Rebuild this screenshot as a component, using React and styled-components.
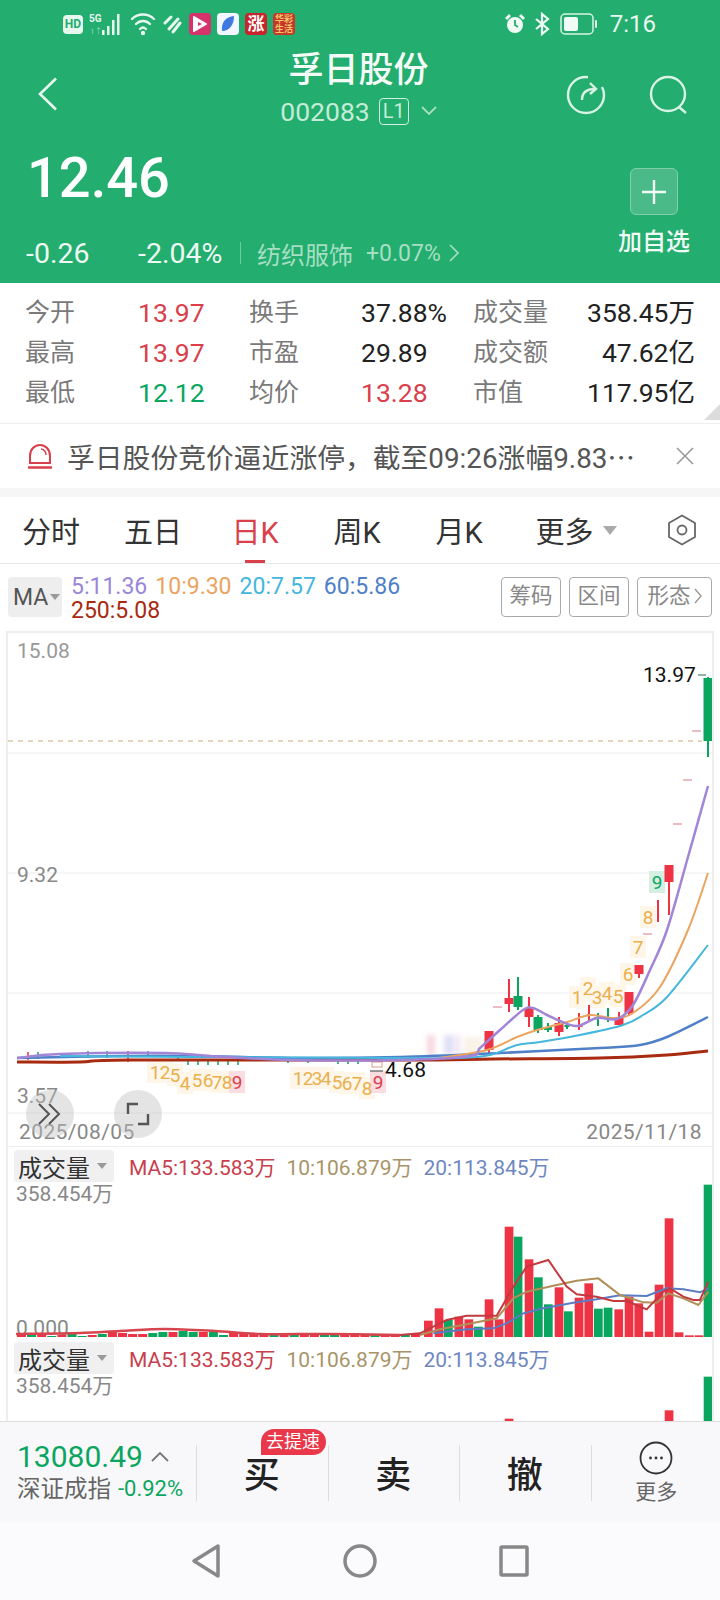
import React from "react";
import styled, { createGlobalStyle } from "styled-components";

const RED = "#ee3344";
const GREEN = "#0aa65f";
const FONT = `Roboto, "Noto Sans CJK SC", sans-serif`;

const GlobalStyle = createGlobalStyle`
    * { box-sizing: border-box; }
    html, body { margin: 0; padding: 0; background: #fff; }
    body { font-family: ${FONT}; }
`;

const Page = styled.div`
    width: 720px;
    height: 1600px;
    overflow: hidden;
    display: flex;
    flex-direction: column;
    background: #fff;
`;

/* header */
const Header = styled.div`
    height: 283px;
    flex: none;
    background: #23ad6e;
    color: #fff;
    display: flex;
    flex-direction: column;
`;

const StatusBar = styled.div`
    height: 48px;
    flex: none;
    display: flex;
    align-items: center;
    padding: 0 64px 0 63px;
`;

const StatusGroup = styled.div`
    display: flex;
    align-items: center;
    gap: ${p => p.$gap || 6}px;
`;

const HdBadge = styled.div`
    width: 20px;
    height: 19px;
    border-radius: 4px;
    background: #e6f7ee;
    color: #23ad6e;
    font-size: 12px;
    font-weight: 700;
    line-height: 19px;
    text-align: center;
`;

const AppIcon = styled.div`
    width: 22px;
    height: 22px;
    border-radius: 4px;
    background: ${p => p.$bg};
    color: ${p => p.$fg || "#fff"};
    font-size: ${p => p.$size || 10}px;
    font-weight: 700;
    line-height: ${p => p.$lh || 22}px;
    text-align: center;
    display: flex;
    align-items: center;
    justify-content: center;
    overflow: hidden;
`;

const Clock = styled.div`
    font-size: 24px;
    margin-left: 12px;
    color: #e9f8f0;
`;

const TitleBar = styled.div`
    height: 82px;
    flex: none;
    display: grid;
    grid-template-columns: 1fr auto 1fr;
    padding-top: 3px;
`;

const BackCell = styled.div`
    padding: 26px 0 0 37px;
`;

const TitleCell = styled.div`
    display: flex;
    flex-direction: column;
    align-items: center;
`;

const Title = styled.div`
    font-size: 35px;
    font-weight: 500;
    line-height: 40px;
    margin-right: 3px;
    color: #f4fbf7;
`;

const CodeRow = styled.div`
    display: flex;
    align-items: center;
    height: 30px;
    margin-top: 5px;
    font-size: 26.5px;
    margin-right: 3px;
    color: #c5ecd9;
`;

const Level = styled.div`
    width: 30px;
    height: 27px;
    margin-left: 9px;
    border: 1px solid #d3f0e2;
    border-radius: 4px;
    font-size: 20px;
    line-height: 25px;
    text-align: center;
`;

const ActionsCell = styled.div`
    display: flex;
    justify-content: flex-end;
    gap: 43px;
    padding: 24px 31px 0 0;
`;

const Quote = styled.div`
    flex: 1;
    display: flex;
    justify-content: space-between;
    padding: 18px 30px 0 26px;
`;

const QuoteLeft = styled.div`
    display: flex;
    flex-direction: column;
`;

const Price = styled.div`
    font-size: 56px;
    font-weight: 500;
    line-height: 60px;
    padding-left: 1px;
`;

const ChangeRow = styled.div`
    margin-top: 30px;
    height: 30px;
    display: flex;
    align-items: center;
`;

const Change = styled.span`
    font-size: 28.5px;
    width: ${p => p.$w}px;
    color: #eefaf4;
`;

const Sector = styled.span`
    display: flex;
    align-items: center;
    gap: 13px;
    height: 22px;
    border-left: 1px solid #6fcaa0;
    padding-left: 16px;
    margin-left: 4px;
    color: #a6dfc4;
    font-size: 24px;
    white-space: nowrap;
`;

const SectorRate = styled.span`
    font-size: 23px;
`;

const AddCol = styled.div`
    display: flex;
    flex-direction: column;
    align-items: center;
    padding-top: 20px;
`;

const AddBox = styled.div`
    width: 48px;
    height: 47px;
    border: 1px solid #7fd0aa;
    border-radius: 6px;
    background: rgba(255, 255, 255, 0.18);
    display: flex;
    align-items: center;
    justify-content: center;
`;

const AddLabel = styled.div`
    margin-top: 13px;
    font-size: 24px;
    line-height: 28px;
    font-weight: 500;
    color: #f0fbf6;
`;

/* stats */
const Stats = styled.div`
    position: relative;
    height: 140px;
    flex: none;
    padding: 10px 25px 0;
    display: grid;
    grid-template-columns: 113px 111px 112px 112px 1fr auto;
    grid-auto-rows: 40px;
    align-items: center;
    font-size: 26.5px;
    line-height: 40px;
`;

const StatLabel = styled.div`
    color: #7a7a7a;
    font-size: 25px;
`;

const StatValue = styled.div`
    color: ${p => p.$color || "#222"};
    text-align: ${p => (p.$right ? "right" : "left")};
    white-space: nowrap;
`;

const CornerMark = styled.div`
    position: absolute;
    right: 0;
    bottom: 3px;
    width: 0;
    height: 0;
    border-left: 16px solid transparent;
    border-bottom: 16px solid #dcdcdc;
`;

/* news alert */
const Alert = styled.div`
    height: 65px;
    flex: none;
    border-top: 1px solid #eee;
    display: flex;
    align-items: center;
    padding: 0 26px 0 27px;
    color: #555;
    font-size: 27.8px;
`;

const AlertText = styled.div`
    flex: 1;
    margin-left: 14px;
    white-space: nowrap;
    overflow: hidden;
`;

const Band = styled.div`
    height: 9px;
    flex: none;
    background: #f6f6f6;
`;

/* period tabs */
const Tabs = styled.div`
    height: 67px;
    flex: none;
    display: flex;
    align-items: center;
    border-bottom: 1px solid #e8e8e8;
    padding-right: 23px;
`;

const Tab = styled.div`
    position: relative;
    width: 102px;
    height: 100%;
    display: flex;
    align-items: center;
    justify-content: center;
    gap: 9px;
    font-size: 29px;
    margin-left: ${p => p.$shift || 0}px;
    color: ${p => (p.$active ? "#d9404c" : "#333")};

    ${p => p.$active && `
        &::after {
            content: "";
            position: absolute;
            left: 41px;
            bottom: 0;
            width: 20px;
            height: 3px;
            background: #d9404c;
        }
    `}
`;

const TabCaret = styled.span`
    width: 0;
    height: 0;
    border-left: 7px solid transparent;
    border-right: 7px solid transparent;
    border-top: 9px solid #aaa;
`;

const TabIcon = styled.div`
    margin-left: auto;
    display: flex;
`;

/* MA legend */
const MaRow = styled.div`
    height: 67px;
    flex: none;
    display: flex;
    align-items: flex-start;
    padding: 13px 8px 0;
`;

const MaSelect = styled.div`
    width: 54px;
    height: 40px;
    flex: none;
    border-radius: 4px;
    background: #eee;
    color: #555;
    font-size: 23px;
    display: flex;
    align-items: center;
    gap: 2px;
    padding-left: 5px;
`;

const SmallCaret = styled.span`
    width: 0;
    height: 0;
    border-left: 5px solid transparent;
    border-right: 5px solid transparent;
    border-top: 6px solid #999;
`;

const MaLegend = styled.div`
    flex: 1;
    margin: -2px 0 0 9px;
    font-size: 23px;
    line-height: 24px;
`;

const MaItem = styled.span`
    color: ${p => p.$color};
    margin-right: 8px;
`;

const ToolButtons = styled.div`
    display: flex;
    gap: 8px;
`;

const ToolButton = styled.div`
    width: ${p => p.$w || 60}px;
    height: 40px;
    border: 1px solid #aaa;
    border-radius: 4px;
    color: #888;
    font-size: 21.5px;
    line-height: 32px;
    padding-bottom: 3px;
    display: flex;
    align-items: center;
    justify-content: center;
    gap: 3px;
`;

/* chart frame */
const ChartFrame = styled.div`
    flex: 1;
    min-height: 0;
    margin: 0 6px;
    border: 2px solid #eee;
    border-bottom: 0;
    overflow: hidden;
`;

const PricePanel = styled.div`
    position: relative;
    height: 482px;
`;

const ChartSvg = styled.svg`
    display: block;
    text {
        font-family: ${FONT};
    }
`;

const RoundButton = styled.div`
    position: absolute;
    top: ${1090 - 633}px;
    left: ${p => p.$left}px;
    width: 48px;
    height: 48px;
    border-radius: 50%;
    background: rgba(190, 190, 190, 0.42);
    display: flex;
    align-items: center;
    justify-content: center;
`;

const DateRow = styled.div`
    height: 32px;
    display: flex;
    align-items: center;
    justify-content: space-between;
    padding: 3px 10px 0 11px;
    border-bottom: 1px solid #eee;
    color: #888;
    font-size: 21px;
    letter-spacing: 0.4px;
`;

const VolumePanel = styled.div`
    position: relative;
    height: 192px;
`;

const VolumeChart = styled.div`
    position: absolute;
    inset: 0;
`;

const VolumeHead = styled.div`
    position: relative;
    display: flex;
    align-items: center;
    padding: 3px 0 0 6px;
    font-size: 21px;
`;

const VolumeSelect = styled.div`
    width: 100px;
    height: 32px;
    border-radius: 4px;
    background: #f0f0f0;
    color: #333;
    font-size: 24px;
    display: flex;
    align-items: center;
    gap: 7px;
    padding-left: 4px;
    margin-right: 15px;
`;

const VolumeItem = styled.span`
    color: ${p => p.$color};
    margin-right: 11px;
`;

const VolumeMax = styled.div`
    position: relative;
    padding-left: 8px;
    color: #888;
    font-size: 21px;
    line-height: 24px;
`;

/* trade bar */
const TradeBar = styled.div`
    height: 101px;
    flex: none;
    border-top: 1px solid #ddd;
    background: #f8f8fa;
    display: flex;
`;

const IndexCell = styled.div`
    width: 196px;
    flex: none;
    padding: 16px 0 0 17px;
`;

const IndexValue = styled.div`
    display: flex;
    align-items: center;
    gap: 8px;
    height: 36px;
    font-size: 30px;
    color: ${GREEN};
`;

const IndexInfo = styled.div`
    display: flex;
    align-items: center;
    gap: 7px;
    height: 30px;
    line-height: 30px;
    color: #666;
    font-size: 23.5px;
    white-space: nowrap;
`;

const IndexRate = styled.span`
    color: ${GREEN};
    font-size: 22px;
`;

const TradeCell = styled.div`
    position: relative;
    width: 131.5px;
    flex: none;
    display: flex;
    flex-direction: column;
    align-items: center;
    justify-content: center;
    color: #222;
    font-size: 36px;
    font-weight: 500;

    &::before {
        content: "";
        position: absolute;
        left: 0;
        top: 23px;
        height: 56px;
        width: 1px;
        background: #ddd;
    }
`;

const Badge = styled.div`
    position: absolute;
    top: 7px;
    right: 2px;
    width: 65px;
    height: 26px;
    border-radius: 14px 14px 14px 0;
    background: #e8384a;
    color: #fff;
    font-size: 18px;
    font-weight: 400;
    line-height: 26px;
    text-align: center;
`;

const MoreLabel = styled.div`
    margin-top: 4px;
    color: #666;
    font-size: 21px;
    line-height: 26px;
    font-weight: 400;
`;

const SystemNav = styled.div`
    height: 78px;
    flex: none;
    background: #fbfbfd;
    display: flex;
    align-items: center;
    justify-content: center;
    gap: 121px;
`;

/* chart data, in page coordinates so the viewBoxes below line up with the picture */
const linePath = pts => "M" + pts.map(p => p.join(" ")).join("L");

// catmull-rom through the points, keeps the MA lines from stepping
const smooth = pts => {
    let d = `M${pts[0][0]} ${pts[0][1]}`;
    for (let i = 0; i < pts.length - 1; i++) {
        const p0 = pts[i - 1] || pts[i];
        const p1 = pts[i];
        const p2 = pts[i + 1];
        const p3 = pts[i + 2] || p2;
        const c1x = p1[0] + (p2[0] - p0[0]) / 6;
        const c1y = p1[1] + (p2[1] - p0[1]) / 6;
        const c2x = p2[0] - (p3[0] - p1[0]) / 6;
        const c2y = p2[1] - (p3[1] - p1[1]) / 6;
        d += `C${c1x} ${c1y} ${c2x} ${c2y} ${p2[0]} ${p2[1]}`;
    }
    return d;
};

const maLines = [
    { color: "#a82a10", w: 3, pts: [[17, 1062], [80, 1062], [130, 1060], [400, 1060], [493, 1059], [600, 1058], [667, 1055], [708, 1051]] },
    { color: "#4f80c8", w: 2.5, pts: [[17, 1058], [120, 1056], [200, 1056], [300, 1058], [400, 1057], [500, 1053], [600, 1048], [640, 1045], [667, 1037], [708, 1017]] },
    { color: "#45b7dc", w: 2, pts: [[60, 1056], [200, 1057], [400, 1058], [460, 1058], [490, 1055], [517, 1045], [540, 1042], [580, 1035], [623, 1025], [643, 1015], [667, 997], [708, 945]] },
    { color: "#eba45f", w: 2, pts: [[440, 1058], [487, 1050], [517, 1037], [537, 1030], [567, 1022], [590, 1015], [613, 1018], [633, 1013], [660, 987], [688, 930], [708, 873]] },
    { color: "#a186d8", w: 2.5, pts: [[17, 1058], [60, 1054], [165, 1053], [210, 1056], [290, 1060], [400, 1060], [470, 1056], [480, 1048], [500, 1030], [523, 1010], [533, 1008], [547, 1015], [560, 1021], [577, 1026], [597, 1018], [617, 1019], [633, 1005], [650, 970], [667, 930], [688, 857], [708, 786]] },
];

// x, body top, body bottom, wick top, wick bottom, width
const candles = [
    [489, 1031, 1050, 1031, 1053, 9, RED], [509, 998, 1004, 979, 1012, 9, RED], [518, 996, 1007, 977, 1010, 9, GREEN],
    [529, 1008, 1017, 997, 1027, 9, RED], [538, 1017, 1030, 1015, 1033, 9, GREEN], [548, 1027, 1030, 1023, 1032, 8, GREEN],
    [559, 1023, 1032, 1017, 1036, 9, RED], [567, 1025, 1027, 1022, 1029, 5, GREEN], [579, 1025, 1027, 1013, 1030, 7, RED],
    [589, 1014, 1016, 1005, 1020, 4, RED], [598, 1017, 1019, 1013, 1026, 7, GREEN], [608, 1014, 1015, 1008, 1022, 2, GREEN],
    [619, 1017, 1025, 1012, 1025, 9, RED], [629, 992, 1013, 992, 1016, 9, RED], [639, 965, 974, 965, 978, 9, RED],
    [658, 901, 902, 900, 922, 2, RED], [669, 865, 882, 865, 915, 9, RED],
    [708, 678, 741, 677, 757, 9, GREEN],
];

const priceTicks = [[697, 731], [688, 780], [678, 824], [648, 934], [498, 1007]];

const tdOrange = [
    [155, 1072, "1"], [165, 1072, "2"], [175, 1075, "5"], [185, 1083, "4"], [197, 1080, "5"], [208, 1080, "6"], [217, 1082, "7"], [227, 1082, "8"],
    [298, 1078, "1"], [308, 1078, "2"], [317, 1078, "3"], [326, 1078, "4"], [337, 1082, "5"], [347, 1083, "6"], [357, 1083, "7"], [367, 1088, "8"],
    [577, 997, "1"], [588, 988, "2"], [597, 997, "3"], [607, 993, "4"], [618, 996, "5"],
    [628, 974, "6"], [638, 947, "7"], [648, 917, "8"],
];

const tdRest = [
    [237, 1082, "9", "#d9404c", "#f9dde0"],
    [378, 1082, "9", "#d9404c", "#f9dde0"],
    [657, 882, "9", GREEN, "#d5efe3"],
];

const smallWicks = [
    [28, 1052, 1060, RED], [38, 1052, 1059, GREEN], [88, 1051, 1058, GREEN], [107, 1051, 1058, GREEN],
    [128, 1051, 1062, RED], [148, 1051, 1057, GREEN], [178, 1056, 1061, GREEN], [188, 1060, 1065, GREEN],
    [198, 1060, 1065, GREEN], [208, 1060, 1065, GREEN], [218, 1060, 1065, GREEN], [228, 1060, 1065, GREEN],
    [238, 1060, 1065, GREEN], [288, 1060, 1063, GREEN], [308, 1060, 1063, GREEN], [338, 1059, 1064, GREEN],
    [348, 1059, 1064, GREEN], [358, 1059, 1064, GREEN],
];

const volBars = [
    [424, 452, RED], [434.7, 415, RED], [444, 450, GREEN], [454.5, 440, RED], [464.5, 448, RED], [474, 470, GREEN],
    [484.7, 388, RED], [494.7, 448, RED], [504.7, 170, RED], [513.7, 200, GREEN], [524.7, 268, RED], [534, 322, GREEN],
    [544, 403, GREEN], [554.7, 352, RED], [564, 424, GREEN], [574.7, 383, RED], [584.4, 340, RED], [594, 416, GREEN],
    [603.7, 413, GREEN], [614.4, 418, RED], [624.7, 380, RED], [634.4, 400, RED], [644.7, 485, RED], [654.7, 344, RED],
    [664.7, 145, RED], [674.7, 487, RED], [685, 496, RED], [694.7, 496, RED], [703.7, 44, GREEN],
];

const lowBarHeights = [3, 2, 3, 1, 2, 3, 1, 2, 3, 6, 4, 3, 3, 4, 5, 5, 6, 5, 5, 5, 2, 4, 4, 3, 4, 4, 2, 2, 2, 3, 2, 2, 3, 2, 2, 3, 2, 2, 2, 3];
const lowBarColors = [RED, GREEN, RED, GREEN, RED, GREEN, GREEN, RED, GREEN, RED, RED, RED, RED, GREEN, GREEN, RED, GREEN, GREEN, RED, GREEN, GREEN, RED, RED, RED, RED, GREEN, RED, GREEN, RED, RED, GREEN, GREEN, RED, RED, RED, GREEN, RED, RED, GREEN, RED];

const volY = v => 1170 + v / 3;
const zoomPts = list => list.map(([x, y]) => [400 + x / 3, volY(y)]);

const volRed = zoomPts([[0, 495], [60, 490], [100, 470], [140, 450], [200, 437], [290, 437], [340, 350], [380, 290], [445, 270], [500, 350], [530, 373], [590, 380], [640, 393], [680, 393], [740, 418], [790, 365], [810, 355], [850, 380], [880, 390], [900, 390], [925, 335]]);
const volTan = zoomPts([[60, 495], [120, 478], [200, 463], [290, 445], [340, 385], [380, 365], [470, 345], [530, 332], [595, 325], [660, 375], [730, 397], [770, 398], [805, 370], [850, 385], [895, 405], [925, 365]]);
const volBlue = zoomPts([[100, 490], [200, 478], [280, 475], [320, 460], [370, 430], [430, 415], [520, 398], [590, 388], [660, 376], [740, 378], [800, 355], [850, 358], [900, 367], [925, 355]]);
const volLeft = [[16, 1334], [80, 1333], [120, 1331], [165, 1329], [215, 1331], [260, 1334], [330, 1334], [400, 1335]];

const TD_SIZE = 19;

const PriceChart = () => (
    <ChartSvg width="704" height="482" viewBox="8 633 704 482">
        {[753, 873, 993, 1113].map(y => (
            <line key={y} x1="8" x2="712" y1={y} y2={y} stroke="#f3f3f3" strokeWidth="1.5" />
        ))}
        <line x1="8" x2="702" y1="741" y2="741" stroke="#c9ad7c" strokeWidth="1" strokeDasharray="5 5" />
        <text x="17" y="658" fontSize="21" fill="#999">15.08</text>
        <text x="17" y="882" fontSize="21" fill="#888">9.32</text>
        <text x="17" y="1103" fontSize="21" fill="#888">3.57</text>

        <g opacity="0.55" style={{ filter: "blur(2.5px)" }}>
            <rect x="427" y="1035" width="8" height="20" fill="#f2b8c6" />
            <rect x="444" y="1035" width="10" height="20" fill="#c8c8ee" />
            <rect x="456" y="1035" width="4" height="20" fill="#e2c8e8" />
            <rect x="464" y="1037" width="18" height="18" fill="#f3e8d4" />
        </g>

        {smallWicks.map(([x, a, b, c], i) => (
            <line key={i} x1={x} x2={x} y1={a} y2={b} stroke={c} strokeWidth="1.5" />
        ))}

        {/* backgrounds first, the marks sit tight enough to touch each other */}
        {tdOrange.map(([x, y], i) => (
            <rect key={i} x={x - 8} y={y - 11} width="16" height="22" fill="#fef6e9" />
        ))}
        {tdRest.map(([x, y, , , bg]) => (
            <rect key={x} x={x - 8} y={y - 11} width="16" height="22" fill={bg} />
        ))}
        {tdOrange.map(([x, y, d], i) => (
            <text key={i} x={x} y={y + TD_SIZE * 0.36} fontSize={TD_SIZE} fill="#e9b04e" textAnchor="middle">{d}</text>
        ))}
        {tdRest.map(([x, y, d, c]) => (
            <text key={x} x={x} y={y + TD_SIZE * 0.36} fontSize={TD_SIZE} fill={c} textAnchor="middle">{d}</text>
        ))}

        {candles.map(([x, t, b, wt, wb, w, c], i) => (
            <g key={i} fill={c}>
                <rect x={x - 1} y={wt} width="2" height={wb - wt} />
                <rect x={x - w / 2} y={t} width={w} height={b - t} />
            </g>
        ))}
        {priceTicks.map(([x, y]) => (
            <line key={y} x1={x - 5} x2={x + 4} y1={y} y2={y} stroke="#e3a9ad" strokeWidth="1.5" />
        ))}
        <line x1="698" x2="706" y1="675" y2="675" stroke="#6f9a88" strokeWidth="1.5" />
        <line x1="370" x2="383" y1="1071" y2="1071" stroke="#777" strokeWidth="1.5" />
        <rect x="372" y="1062" width="10" height="5" fill="none" stroke="#d98" strokeWidth="1" />

        {maLines.map(l => (
            <path key={l.color} d={smooth(l.pts)} fill="none" stroke={l.color} strokeWidth={l.w} />
        ))}

        <text x="643" y="682" fontSize="21" fill="#111">13.97</text>
        <text x="385" y="1077" fontSize="21" fill="#111">4.68</text>
    </ChartSvg>
);

const VolumeBars = () => (
    <ChartSvg width="704" height="192" viewBox="8 1147 704 192">
        <text x="16" y="1335" fontSize="21" fill="#888">0.000</text>
        {lowBarHeights.map((h, i) => (
            <rect key={i} x={17 + i * 10.1} y={1337 - h} width="9" height={h} fill={lowBarColors[i]} />
        ))}
        {volBars.map(([x, top, c]) => (
            <rect key={x} x={x} y={volY(top)} width="8.7" height={1337 - volY(top)} fill={c} />
        ))}
        <path d={smooth(volLeft)} fill="none" stroke="#d6454d" strokeWidth="2.5" />
        <path d={linePath(volBlue)} fill="none" stroke="#5a7cc4" strokeWidth="2" />
        <path d={linePath(volTan)} fill="none" stroke="#b08f58" strokeWidth="2" />
        <path d={linePath(volRed)} fill="none" stroke="#c23a3f" strokeWidth="2" />
    </ChartSvg>
);

const Volume = () => (
    <VolumePanel>
        <VolumeChart><VolumeBars /></VolumeChart>
        <VolumeHead>
            <VolumeSelect>成交量<SmallCaret /></VolumeSelect>
            <VolumeItem $color="#c8404d">MA5:133.583万</VolumeItem>
            <VolumeItem $color="#a89468">10:106.879万</VolumeItem>
            <VolumeItem $color="#6f87c0">20:113.845万</VolumeItem>
        </VolumeHead>
        <VolumeMax>358.454万</VolumeMax>
    </VolumePanel>
);

const stats = [
    ["今开", "13.97", "#d9404c", "换手", "37.88%", "", "成交量", "358.45万"],
    ["最高", "13.97", "#d9404c", "市盈", "29.89", "", "成交额", "47.62亿"],
    ["最低", "12.12", GREEN, "均价", "13.28", "#d9404c", "市值", "117.95亿"],
];

const App = () => (
    <Page>
        <GlobalStyle />
        <Header>
            <StatusBar>
                <StatusGroup>
                    <HdBadge>HD</HdBadge>
                    <svg width="34" height="24" viewBox="0 0 34 24">
                        <text x="0" y="10" fontSize="10" fontWeight="700" fill="#e6f7ee">5G</text>
                        <text x="1" y="22" fontSize="8" fill="#8fd8b5">1↑</text>
                        <g fill="#e6f7ee">
                            <rect x="13" y="18" width="2.5" height="5" />
                            <rect x="18" y="14" width="2.5" height="9" />
                            <rect x="23" y="8" width="2.5" height="15" />
                            <rect x="28" y="2" width="2.5" height="21" />
                        </g>
                    </svg>
                    <svg width="26" height="24" viewBox="0 0 26 24" fill="none" stroke="#e6f7ee" strokeWidth="2.4" strokeLinecap="round" style={{ marginLeft: 1 }}>
                        <path d="M2 7c6-6 16-6 22 0" />
                        <path d="M6 12c4-4 10-4 14 0" />
                        <path d="M10 17c2-2 4-2 6 0" />
                        <circle cx="13" cy="21" r="1" fill="#e6f7ee" />
                    </svg>
                    <svg width="20" height="20" viewBox="0 0 20 20" fill="none" stroke="#e6f7ee" strokeWidth="3" strokeLinecap="round" style={{ marginLeft: 1 }}>
                        <path d="M2 9l6-6M6 15l9-10M10 18l7-9" />
                    </svg>
                    <AppIcon $bg="#d6336c">
                        <svg width="16" height="18" viewBox="0 0 16 18"><path d="M2 2l12 7-12 7z" fill="#fff" stroke="#fff" strokeWidth="2" strokeLinejoin="round" /><path d="M6 7l4 2-4 2z" fill="#d6336c" /></svg>
                    </AppIcon>
                    <AppIcon $bg="#f2f7ff">
                        <svg width="16" height="18" viewBox="0 0 16 18"><path d="M14 1C6 2 1 7 2 16c7 0 12-6 12-15z" fill="#3f78e0" /></svg>
                    </AppIcon>
                    <AppIcon $bg="#c9242c" $size={17}>涨</AppIcon>
                    <AppIcon $bg="#c7362a" $fg="#f3c66a" $size={9} $lh={10}>华彩<br />生活</AppIcon>
                </StatusGroup>
                <StatusGroup $gap={8} style={{ marginLeft: "auto" }}>
                    <svg width="22" height="24" viewBox="0 0 22 24" fill="#f0fbf6">
                        <circle cx="11" cy="13" r="8" />
                        <path d="M1 6l4-4 2 2-4 4zM21 6l-4-4-2 2 4 4z" />
                        <path d="M11 8v5l3 2" stroke="#23ad6e" strokeWidth="1.8" fill="none" />
                    </svg>
                    <svg width="17" height="24" viewBox="0 0 17 24" fill="none" stroke="#f0fbf6" strokeWidth="2.2">
                        <path d="M2 7l12 10-6 5V2l6 5L2 17" />
                    </svg>
                    <svg width="38" height="24" viewBox="0 0 38 24" fill="none" style={{ marginLeft: 1 }}>
                        <rect x="1" y="2" width="32" height="20" rx="4" stroke="#d9f3e6" strokeWidth="1.5" />
                        <rect x="4" y="5" width="14" height="14" rx="2" fill="#f0fbf6" />
                        <rect x="35" y="8" width="2" height="8" rx="1" fill="#d9f3e6" />
                    </svg>
                </StatusGroup>
                <Clock>7:16</Clock>
            </StatusBar>

            <TitleBar>
                <BackCell>
                    <svg width="22" height="34" viewBox="0 0 22 34" fill="none" stroke="#e8f8f0" strokeWidth="2.6">
                        <path d="M19 1.5L3 17l16 15.5" />
                    </svg>
                </BackCell>
                <TitleCell>
                    <Title>孚日股份</Title>
                    <CodeRow>
                        002083
                        <Level>L1</Level>
                        <svg width="16" height="10" viewBox="0 0 16 10" fill="none" stroke="#a6dfc4" strokeWidth="1.8" style={{ marginLeft: 12 }}>
                            <path d="M1 1l7 7 7-7" />
                        </svg>
                    </CodeRow>
                </TitleCell>
                <ActionsCell>
                    <svg width="40" height="40" viewBox="0 0 40 40" fill="none" stroke="#d9f3e6" strokeWidth="2.4">
                        <path d="M22 2.2C11 1 2 9 2 20c0 10 8 18 18 18s18-8 18-18c0-3-.6-5.500-2-8" />
                        <path d="M16 25c0-8 5-11 13-11" />
                        <path d="M24 8l6 6-6 5" />
                    </svg>
                    <svg width="40" height="40" viewBox="0 0 40 40" fill="none" stroke="#d9f3e6" strokeWidth="2.4">
                        <circle cx="19" cy="19" r="17" />
                        <path d="M30 32l7 6" />
                    </svg>
                </ActionsCell>
            </TitleBar>

            <Quote>
                <QuoteLeft>
                    <Price>12.46</Price>
                    <ChangeRow>
                        <Change $w={112}>-0.26</Change>
                        <Change $w={98}>-2.04%</Change>
                        <Sector>
                            纺织服饰
                            <SectorRate>+0.07%</SectorRate>
                            <svg width="10" height="18" viewBox="0 0 10 18" fill="none" stroke="#a6dfc4" strokeWidth="1.6" style={{ marginLeft: -5 }}>
                                <path d="M1 1l8 8-8 8" />
                            </svg>
                        </Sector>
                    </ChangeRow>
                </QuoteLeft>
                <AddCol>
                    <AddBox>
                        <svg width="26" height="26" viewBox="0 0 26 26" stroke="#f4fbf7" strokeWidth="2.4">
                            <path d="M13 1v24M1 13h24" />
                        </svg>
                    </AddBox>
                    <AddLabel>加自选</AddLabel>
                </AddCol>
            </Quote>
        </Header>

        <Stats>
            {stats.map(r => (
                <React.Fragment key={r[0]}>
                    <StatLabel>{r[0]}</StatLabel>
                    <StatValue $color={r[2]}>{r[1]}</StatValue>
                    <StatLabel>{r[3]}</StatLabel>
                    <StatValue $color={r[5]}>{r[4]}</StatValue>
                    <StatLabel>{r[6]}</StatLabel>
                    <StatValue $right>{r[7]}</StatValue>
                </React.Fragment>
            ))}
            <CornerMark />
        </Stats>

        <Alert>
            <svg width="26" height="26" viewBox="0 0 26 26" fill="none" stroke="#d9404c" strokeWidth="2">
                <path d="M3 20V13C3 7 7 2 13 2s10 5 10 11v7z" />
                <path d="M14 6c3 .5 5 3 5 6" strokeWidth="1.5" />
                <path d="M1 24.500h24" strokeWidth="2.500" />
            </svg>
            <AlertText>孚日股份竞价逼近涨停，截至09:26涨幅9.83⋯</AlertText>
            <svg width="18" height="18" viewBox="0 0 18 18" stroke="#999" strokeWidth="1.6">
                <path d="M1 1l16 16M17 1L1 17" />
            </svg>
        </Alert>

        <Band />

        <Tabs>
            <Tab>分时</Tab>
            <Tab>五日</Tab>
            <Tab $active>日K</Tab>
            <Tab>周K</Tab>
            <Tab>月K</Tab>
            <Tab $shift={15}>更多<TabCaret /></Tab>
            <TabIcon>
                <svg width="30" height="32" viewBox="0 0 30 32" fill="none" stroke="#666" strokeWidth="1.8">
                    <path d="M15 1.500L28 9v14l-13 7.500L2 23V9z" strokeLinejoin="round" />
                    <circle cx="15" cy="16" r="4.500" />
                </svg>
            </TabIcon>
        </Tabs>

        <MaRow>
            <MaSelect>MA<SmallCaret /></MaSelect>
            <MaLegend>
                <MaItem $color="#9a87d6">5:11.36</MaItem>
                <MaItem $color="#eba45f">10:9.30</MaItem>
                <MaItem $color="#45b7dc">20:7.57</MaItem>
                <MaItem $color="#4f80c8">60:5.86</MaItem>
                <br />
                <MaItem $color="#a82a10">250:5.08</MaItem>
            </MaLegend>
            <ToolButtons>
                <ToolButton>筹码</ToolButton>
                <ToolButton>区间</ToolButton>
                <ToolButton $w={75}>
                    形态
                    <svg width="8" height="16" viewBox="0 0 8 16" fill="none" stroke="#999" strokeWidth="1.4">
                        <path d="M1 1l6 7-6 7" />
                    </svg>
                </ToolButton>
            </ToolButtons>
        </MaRow>

        <ChartFrame>
            <PricePanel>
                <PriceChart />
                <RoundButton $left={18}>
                    <svg width="26" height="22" viewBox="0 0 26 22" fill="none" stroke="#555" strokeWidth="2">
                        <path d="M2 1l10 10L2 21M12 1l10 10-10 10" />
                    </svg>
                </RoundButton>
                <RoundButton $left={106}>
                    <svg width="24" height="24" viewBox="0 0 24 24" fill="none" stroke="#555" strokeWidth="2.4">
                        <path d="M12 2H2v10M12 22h10V12" />
                    </svg>
                </RoundButton>
            </PricePanel>
            <DateRow>
                <span>2025/08/05</span>
                <span>2025/11/18</span>
            </DateRow>
            <Volume />
            <Volume />
        </ChartFrame>

        <TradeBar>
            <IndexCell>
                <IndexValue>
                    13080.49
                    <svg width="18" height="11" viewBox="0 0 18 11" fill="none" stroke="#777" strokeWidth="1.8">
                        <path d="M1 10l8-8 8 8" />
                    </svg>
                </IndexValue>
                <IndexInfo>深证成指<IndexRate>-0.92%</IndexRate></IndexInfo>
            </IndexCell>
            <TradeCell>
                买
                <Badge>去提速</Badge>
            </TradeCell>
            <TradeCell>卖</TradeCell>
            <TradeCell>撤</TradeCell>
            <TradeCell>
                <svg width="34" height="34" viewBox="0 0 34 34" fill="none" stroke="#333" strokeWidth="1.8" style={{ marginTop: 2 }}>
                    <circle cx="17" cy="17" r="15.500" />
                    <g fill="#333" stroke="none">
                        <circle cx="11.500" cy="17" r="1.400" />
                        <circle cx="17" cy="17" r="1.400" />
                        <circle cx="22.500" cy="17" r="1.400" />
                    </g>
                </svg>
                <MoreLabel>更多</MoreLabel>
            </TradeCell>
        </TradeBar>

        <SystemNav>
            <svg width="32" height="36" viewBox="0 0 32 36" fill="none" stroke="#888" strokeWidth="3.5" strokeLinejoin="round">
                <path d="M28 3v30L4 18z" />
            </svg>
            <svg width="34" height="36" viewBox="0 0 34 36" fill="none" stroke="#888" strokeWidth="3.5">
                <circle cx="17" cy="18" r="15" />
            </svg>
            <svg width="32" height="34" viewBox="0 0 32 34" fill="none" stroke="#888" strokeWidth="3.5" strokeLinejoin="round">
                <rect x="3" y="3" width="26" height="28" rx="1" />
            </svg>
        </SystemNav>
    </Page>
);

export default App;
